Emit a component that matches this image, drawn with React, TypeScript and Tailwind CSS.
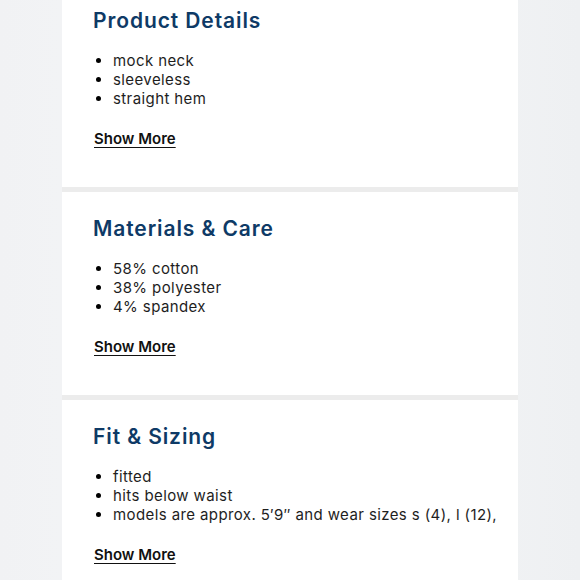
const sections = [
  { title: "Product Details", items: ["mock neck", "sleeveless", "straight hem"] },
  { title: "Materials & Care", items: ["58% cotton", "38% polyester", "4% spandex"] },
  {
    title: "Fit & Sizing",
    items: ["fitted", "hits below waist", "models are approx. 5\u20329\u2033 and wear sizes s (4), l (12),"],
  },
];

export default function App() {
  return (
    <div
      className="w-[580px] h-[580px] overflow-hidden bg-gradient-to-r from-[#f1f2f4] via-[#f6f7f8] to-[#eef0f2]"
      style={{ fontFamily: "Inter, 'Open Sans', sans-serif" }}
    >
      <div className="ml-[62px] w-[456px] -mt-[16px] flex flex-col">
        {sections.map((s, i) => (
          <div key={s.title} className="flex flex-col">
            {i > 0 && <div className="h-[5px] bg-[#ececec]" />}
            <div className="h-[203px] bg-white pl-[31px] pt-[23px]">
              <h2 className="text-[21px] leading-[28px] font-semibold text-[#0e3a66] tracking-[0.9px]">
                {s.title}
              </h2>
              <ul className="mt-[16px] list-disc pl-[20px] text-[15px] leading-[19px] tracking-[0.4px] text-[#1e1e1e] marker:text-black">
                {s.items.map((it) => (
                  <li key={it} className="whitespace-nowrap">{it}</li>
                ))}
              </ul>
              <div className="mt-[21px] ml-[1px] text-[15px] leading-[19px] font-semibold text-[#111] underline underline-offset-[3px]">
                Show More
              </div>
            </div>
          </div>
        ))}
      </div>
    </div>
  );
}
